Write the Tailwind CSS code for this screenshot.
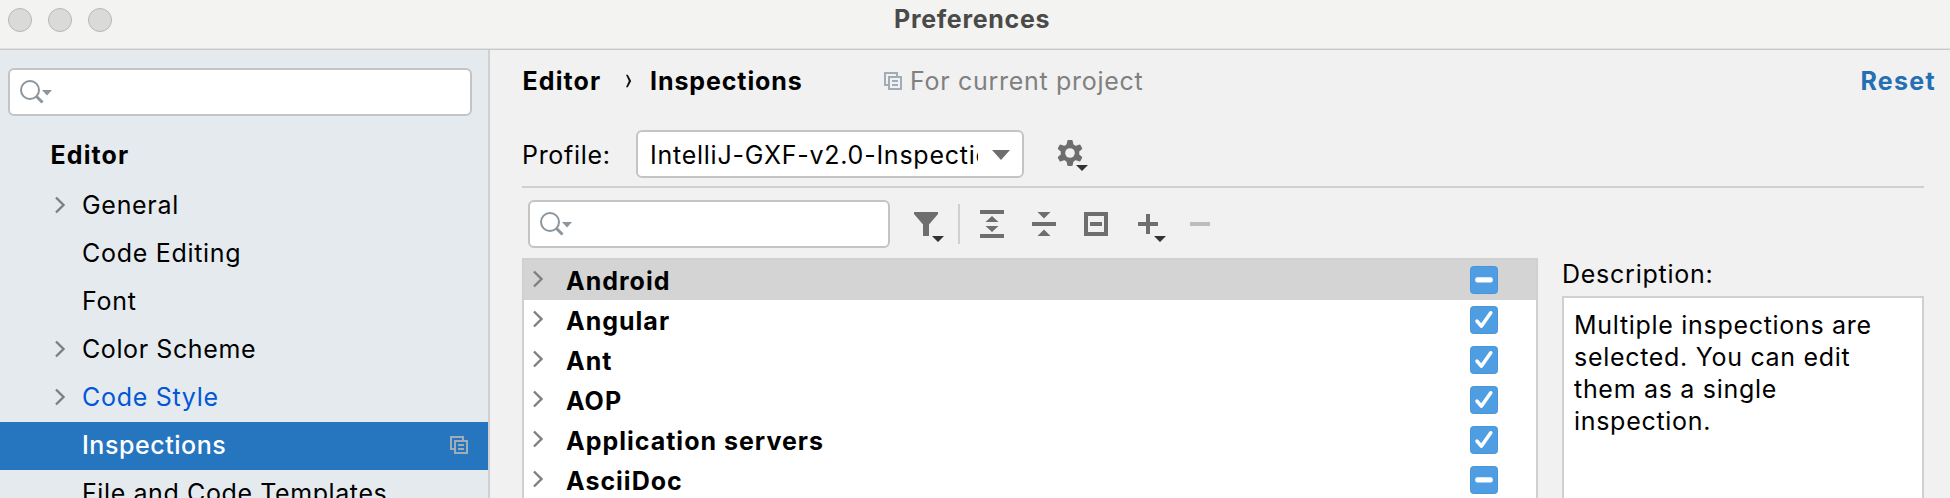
<!DOCTYPE html>
<html lang="en">
<head>
<meta charset="utf-8">
<title>Preferences</title>
<script src="https://cdn.jsdelivr.net/npm/@tailwindcss/browser@4"></script>
</head>
<body class="w-[1950px] h-[498px] overflow-hidden bg-[#f1f1f1] text-black font-['Inter',sans-serif] text-[25px] leading-8 tracking-[0.7px] whitespace-nowrap">
<svg class="hidden">
  <symbol id="chev" viewBox="0 0 12 18"><path d="M2 1.500 9.500 9 2 16.500" fill="none" stroke="#7f7f7f" stroke-width="2.4"/></symbol>
  <symbol id="mag" viewBox="0 0 34 26"><circle cx="11" cy="11" r="9" fill="none" stroke="#8a959d" stroke-width="2"/><path d="M17.500 17.500 23.500 23.500" stroke="#8a959d" stroke-width="3"/><path d="M23 11h10l-5 5.500z" fill="#8a959d"/></symbol>
  <symbol id="copy" viewBox="0 0 18 18"><path d="M4 13H1V1h12v3M5 5h12v12H5zM8 9h6M8 13h6" fill="none" stroke="#9eadb6" stroke-width="2"/></symbol>
  <symbol id="check" viewBox="0 0 28 28"><rect x=".5" y=".5" width="27" height="27" rx="3" fill="#4f9ee3" stroke="#4a94d8"/><path d="M7 15.200 11.300 20.200 20.800 6.800" fill="none" stroke="#fff" stroke-width="3.6" stroke-linecap="round" stroke-linejoin="round"/></symbol>
  <symbol id="mixed" viewBox="0 0 28 28"><rect x=".5" y=".5" width="27" height="27" rx="3" fill="#4f9ee3" stroke="#4a94d8"/><rect x="5.3" y="11.2" width="17.4" height="5.4" rx="2" fill="#fff"/></symbol>
</svg>

<header class="h-[50px] bg-[#f3f3f1] border-b border-[#c8c8c8] flex relative">
  <div class="flex gap-4 pl-2 pt-2">
    <span class="size-6 rounded-full bg-[#dadad9] border border-[#b7b7b6]"></span>
    <span class="size-6 rounded-full bg-[#dadad9] border border-[#b7b7b6]"></span>
    <span class="size-6 rounded-full bg-[#dadad9] border border-[#b7b7b6]"></span>
  </div>
  <h1 class="absolute left-[894px] top-[3px] font-bold text-[#4a4a49]">Preferences</h1>
  <div class="absolute left-0 right-0 bottom-0 h-px bg-[#e2e2e1]"></div>
</header>

<div class="flex h-[448px]">
  <aside class="w-[490px] shrink-0 border-r-2 border-[#d0d0d0] bg-[#e5eaee] overflow-hidden pt-[18px]">
    <div class="ml-2 w-[464px] h-12 bg-white border-2 border-[#c4c4c4] rounded-[6px] pl-[9px] pt-[9px]"><svg class="w-[34px] h-[26px]"><use href="#mag"/></svg></div>
    <div class="h-[52px] mt-[14px] pt-[9px] pl-[50.5px] font-bold tracking-[1.1px]">Editor</div>
    <nav>
      <div class="h-12 flex pl-[54px] pt-[7px]"><svg class="w-3 h-[18px] mt-[7px] mr-4"><use href="#chev"/></svg>General</div>
      <div class="h-12 pl-[82px] pt-[7px]">Code Editing</div>
      <div class="h-12 pl-[82px] pt-[7px]">Font</div>
      <div class="h-12 flex pl-[54px] pt-[7px]"><svg class="w-3 h-[18px] mt-[7px] mr-4"><use href="#chev"/></svg><span class="tracking-[0.6px]">Color Scheme</span></div>
      <div class="h-12 flex pl-[54px] pt-[7px] text-[#0057d8]"><svg class="w-3 h-[18px] mt-[7px] mr-4"><use href="#chev"/></svg>Code Style</div>
      <div class="h-12 flex justify-between pl-[82px] pr-5 pt-[7px] bg-[#2675bf] text-white font-medium tracking-[0.55px]">Inspections<svg class="size-[18px] mt-[7px]"><use href="#copy"/></svg></div>
      <div class="h-12 pl-[82px] pt-[7px] tracking-[0.6px]">File and Code Templates</div>
    </nav>
  </aside>

  <main class="flex-1 pl-8 flex flex-col">
    <div class="h-[62px] flex items-center pr-[14px] font-bold">
      <span class="w-[102px] pl-[0.5px] tracking-[1.1px]">Editor</span>
      <svg class="w-[26px] h-[14px]" viewBox="0 0 26 14"><path d="M2 .8h1.800L7.200 7 3.800 13.200H2L4.800 7z" fill="#111"/></svg>
      <span class="w-[232px] tracking-[0.9px]">Inspections</span>
      <svg class="size-[18px] ml-0.5"><use href="#copy"/></svg>
      <span class="font-normal text-[#808080] ml-[8px]">For current project</span>
      <span class="ml-auto text-[#2470b3] tracking-[1.3px]">Reset</span>
    </div>

    <div class="h-12 mt-[18px] flex items-center">
      <span class="w-[114px] pt-0.5">Profile:</span>
      <div class="w-[388px] h-12 bg-white border-2 border-[#c4c4c4] rounded-[6px] flex items-center pl-[12px] pr-3">
        <span class="w-[328px] overflow-hidden pt-0.5 tracking-[0.75px]">IntelliJ-GXF-v2.0-Inspections</span>
        <svg class="w-[18px] h-[10px] ml-[14px] mt-0.5 shrink-0" viewBox="0 0 18 10"><path d="M0 0h18L9 10z" fill="#6e6e6e"/></svg>
      </div>
      <svg class="w-[32px] h-[34px] ml-[32px] mt-1" viewBox="0 0 32 34">
        <g fill="#6e6e6e">
          <path id="tooth" d="M11.200 2.200Q11.400 1 12.400 1h3.200Q16.600 1 16.800 2.200L17.500 6v16l-.7 3.800Q16.600 27 15.600 27h-3.200Q11.400 27 11.200 25.800L10.500 22V6z"/>
          <use href="#tooth" transform="rotate(60 14 14)"/>
          <use href="#tooth" transform="rotate(120 14 14)"/>
          <circle cx="14" cy="14" r="9.3"/>
        </g>
        <circle cx="14" cy="14" r="4.8" fill="#f1f1f1"/>
        <path d="M20 26h12l-6 6z" fill="#333"/>
      </svg>
    </div>

    <div class="mt-2 h-0.5 w-[1402px] bg-[#d0d0d0] shrink-0"></div>

    <div class="mt-3 h-12 flex items-center pl-[6px] shrink-0">
      <div class="w-[362px] h-12 bg-white border-2 border-[#c4c4c4] rounded-[6px] pl-[9px] pt-[9px]"><svg class="w-[34px] h-[26px]"><use href="#mag"/></svg></div>
      <svg class="w-[322px] h-[44px] ml-[22px]" viewBox="912 202 322 44">
        <g fill="#6e6e6e">
          <path d="M914 212h24v2l-9 10.500V236h-6V224.500L914 214z"/>
          <path d="M980 210h24v4h-24zM980 234h24v4h-24zM985.500 222h13l-6.500-6zM985.500 226h13l-6.500 6z"/>
          <path d="M1032 222h24v4h-24zM1037.500 212h13l-6.500 6.500zM1037.500 236h13l-6.500-6.500z"/>
          <path fill-rule="evenodd" d="M1084 212h24v24h-24zM1088 216v16h16v-16zM1090 222h12v4h-12z"/>
          <path d="M1146 214h4v8h8v4h-8v8h-4v-8h-8v-4h8z"/>
        </g>
        <path d="M958 204h2v40h-2z" fill="#d0d0d0"/>
        <path d="M1190 222h20v4h-20z" fill="#bdbdbd"/>
        <path d="M932 236h12l-6 6zM1154 236h12l-6 6z" fill="#333"/>
      </svg>
    </div>

    <div class="flex mt-[10px] h-[240px] shrink-0">
      <section class="w-[1016px] border-2 border-b-0 border-[#d0d0d0] bg-white font-bold tracking-[1px]">
        <div class="h-10 flex pl-2 pr-[38px] pt-[5px] bg-[#d4d4d4]"><svg class="w-3 h-[18px] mt-[5px] mr-[22px]"><use href="#chev"/></svg><span>Android</span><svg class="size-7 mt-px ml-auto"><use href="#mixed"/></svg></div>
        <div class="h-10 flex pl-2 pr-[38px] pt-[5px]"><svg class="w-3 h-[18px] mt-[5px] mr-[22px]"><use href="#chev"/></svg><span>Angular</span><svg class="size-7 mt-px ml-auto"><use href="#check"/></svg></div>
        <div class="h-10 flex pl-2 pr-[38px] pt-[5px]"><svg class="w-3 h-[18px] mt-[5px] mr-[22px]"><use href="#chev"/></svg><span>Ant</span><svg class="size-7 mt-px ml-auto"><use href="#check"/></svg></div>
        <div class="h-10 flex pl-2 pr-[38px] pt-[5px]"><svg class="w-3 h-[18px] mt-[5px] mr-[22px]"><use href="#chev"/></svg><span>AOP</span><svg class="size-7 mt-px ml-auto"><use href="#check"/></svg></div>
        <div class="h-10 flex pl-2 pr-[38px] pt-[5px]"><svg class="w-3 h-[18px] mt-[5px] mr-[22px]"><use href="#chev"/></svg><span>Application servers</span><svg class="size-7 mt-px ml-auto"><use href="#check"/></svg></div>
        <div class="h-[38px] flex pl-2 pr-[38px] pt-[5px]"><svg class="w-3 h-[18px] mt-[5px] mr-[22px]"><use href="#chev"/></svg><span>AsciiDoc</span><svg class="size-7 mt-px ml-auto"><use href="#mixed"/></svg></div>
      </section>
      <section class="ml-6 w-[362px] flex flex-col">
        <div class="h-[38px] tracking-[0.75px]">Description:</div>
        <div class="flex-1 bg-white border-2 border-b-0 border-[#d0d0d0] pl-[10px] pt-[11px]">Multiple inspections are<br>selected. You can edit<br>them as a single<br>inspection.</div>
      </section>
    </div>
  </main>
</div>
</body>
</html>
